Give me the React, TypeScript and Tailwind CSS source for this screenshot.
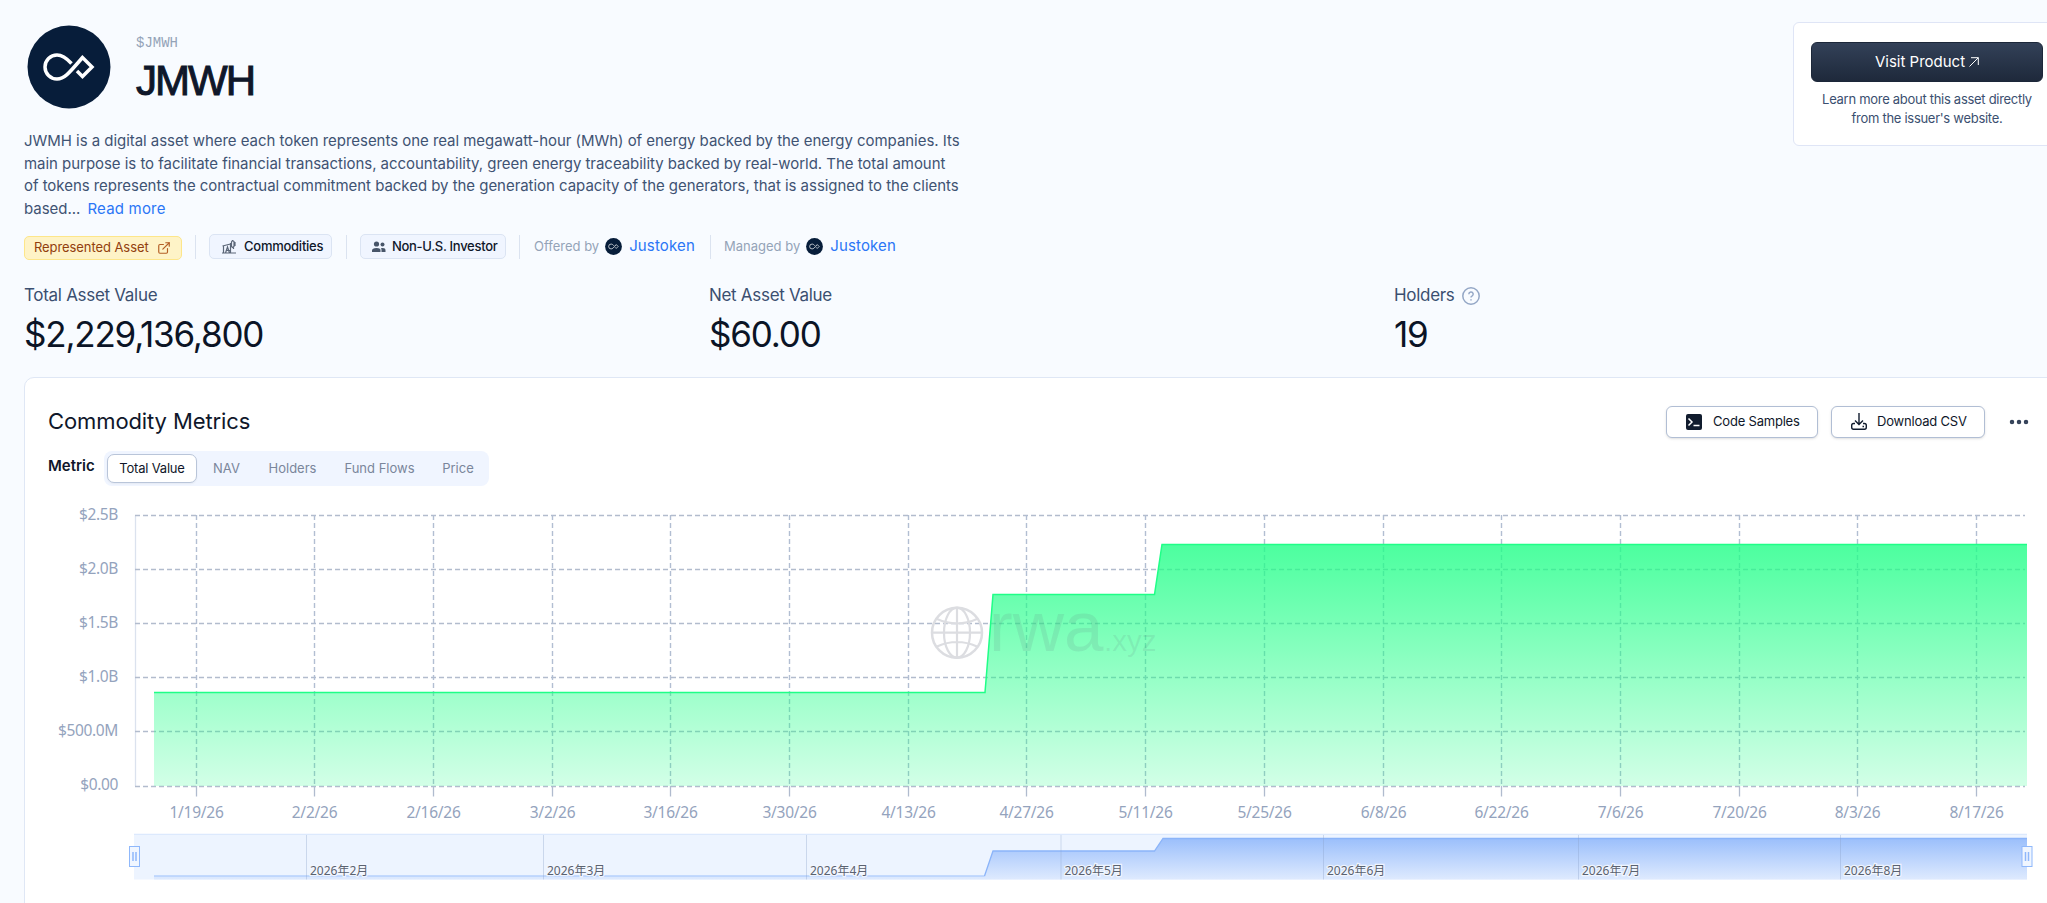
import type { ReactNode } from 'react';
import { ExternalLink, Ellipsis } from 'lucide-react';

const TICKS = [
  '1/19/26', '2/2/26', '2/16/26', '3/2/26', '3/16/26', '3/30/26', '4/13/26', '4/27/26',
  '5/11/26', '5/25/26', '6/8/26', '6/22/26', '7/6/26', '7/20/26', '8/3/26', '8/17/26',
];

const LEVELS = ['$2.5B', '$2.0B', '$1.5B', '$1.0B', '$500.0M', '$0.00'];

const MONTHS = [
  { label: '2026年2月', x: 306.5 },
  { label: '2026年3月', x: 543.5 },
  { label: '2026年4月', x: 806.5 },
  { label: '2026年5月', x: 1061 },
  { label: '2026年6月', x: 1323.5 },
  { label: '2026年7月', x: 1578.5 },
  { label: '2026年8月', x: 1840.5 },
];

function JustokenLogo({ className }: { className: string }) {
  return (
    <svg viewBox="0 0 84 84" className={className}>
      <circle cx="42" cy="42" r="41.5" fill="#071d3a" />
      <path
        d="M44.5 38.5C39 32.500 35 30 30 30a12 12 0 1 0 0 24c7 0 11-4.500 25.500-21.500L65 42 55.500 51.500 50 46"
        fill="none"
        stroke="#fff"
        strokeWidth="3.500"
      />
    </svg>
  );
}

function Divider() {
  return <div className="h-6 w-px bg-[#dbe3f0]" />;
}

function Chip({ icon, children, className }: { icon: ReactNode; children: ReactNode; className: string }) {
  return (
    <div className={`flex h-[25px] items-center rounded-[5px] border border-[#dbe4f3] bg-[#f0f5ff] text-[13px] font-medium whitespace-nowrap text-[#0f172a] ${className}`}>
      {icon}
      {children}
    </div>
  );
}

function Party({ role }: { role: string }) {
  return (
    <div className="flex items-center">
      <span className="text-[13px] text-[#94a3b8]">{role}</span>
      <JustokenLogo className="ml-[6px] size-[17px]" />
      <span className="ml-[7px] text-[15px] tracking-[0.15px] text-[#2b76f6]">Justoken</span>
    </div>
  );
}

function Stat({ label, value, help }: { label: string; value: string; help?: boolean }) {
  return (
    <div className="w-[685px]">
      <div className="flex h-6 items-center text-[17px] tracking-[-0.3px] text-[#3b4f70]">
        <span>{label}</span>
        {help && (
          <svg viewBox="0 0 18 18" className="ml-[7px] size-[18px]" fill="none" stroke="#94a7c6" strokeWidth="1.500">
            <circle cx="9" cy="9" r="8.200" />
            <path d="M6.800 7.200a2.200 2.200 0 1 1 3.200 2c-.7.350-1 .7-1 1.400M9 12.200v1.300" />
          </svg>
        )}
      </div>
      <div className="mt-[6px] text-[35px] leading-[40px] tracking-[-1.2px] text-[#0b1426]">{value}</div>
    </div>
  );
}

function VisitCard() {
  return (
    <div className="mt-[22px] h-[124px] w-[268px] rounded-[6px] border border-[#dfe5f6] bg-white pt-[19px] pl-[17px]">
      <button className="flex h-10 w-[232px] items-center justify-center rounded-[6px] border border-[#1c2739] bg-linear-to-b from-[#334158] to-[#1e293b] text-[15px] text-white">
        Visit Product
        <svg viewBox="0 0 10 10" className="ml-1 size-[10px]" fill="none" stroke="currentColor">
          <path d="M.5 9.500 9.300.7M2 .7h7.300V8" />
        </svg>
      </button>
      <p className="mt-2 w-[232px] text-center text-[13px] leading-[19px] tracking-[-0.29px] text-[#3b4f70]">
        Learn more about this asset directly
        <br />
        from the issuer's website.
      </p>
    </div>
  );
}

function MetricTabs() {
  return (
    <div className="ml-[9px] flex h-[35px] items-center rounded-[8px] bg-[#f0f5ff] px-[3px] text-[13px] text-[#7a869b]">
      <div className="flex h-[29px] w-[90px] items-center justify-center rounded-[7px] border border-[#b9c5d9] bg-white tracking-[-0.2px] text-[#0f172a] shadow-xs">
        Total Value
      </div>
      <div className="w-[59px] text-center">NAV</div>
      <div className="w-[73px] text-center">Holders</div>
      <div className="w-[101px] text-center">Fund Flows</div>
      <div className="w-[56px] text-center">Price</div>
    </div>
  );
}

function Watermark() {
  return (
    <g>
      <g fill="none" stroke="#dcdde1" strokeWidth="2.200">
        <circle cx="957" cy="632.700" r="25" strokeWidth="2.500" />
        <ellipse cx="957" cy="632.700" rx="13" ry="25" />
        <path d="M957 607.700v50M932 632.700h50M937 619q20 9 40 0M937 646.500q20-9 40 0" />
      </g>
      <g fill="#5a6f78" fillOpacity="0.130" fontFamily="Liberation Sans, sans-serif">
        <text x="989" y="651" fontSize="71">rwa</text>
        <text x="1104" y="651" fontSize="29.500">.xyz</text>
      </g>
    </g>
  );
}

function Handle({ x }: { x: number }) {
  return (
    <g fill="#f0f6ff" stroke="#8fb8fb">
      <rect x={x - 5} y="846.500" width="10" height="20" />
      <path d="M-1.500-4.500v9M1.500-4.500v9" transform={`translate(${x} 856.500)`} strokeWidth="1.500" />
    </g>
  );
}

function MetricsChart() {
  return (
    <svg viewBox="25 500 2022 403" className="mt-[14px] block h-[403px] w-[2022px] shrink-0" fontFamily="Noto Sans, Noto Sans CJK SC, sans-serif">
      <defs>
        <linearGradient id="area" x1="0" y1="0" x2="0" y2="1">
          <stop offset="0" stopColor="#1fff87" stopOpacity="0.800" />
          <stop offset="1" stopColor="#1fff87" stopOpacity="0.200" />
        </linearGradient>
        <linearGradient id="brush" x1="0" y1="0" x2="0" y2="1">
          <stop offset="0" stopColor="#9bbffb" />
          <stop offset="1" stopColor="#deeafe" />
        </linearGradient>
      </defs>

      {/* Grid */}
      <path d="M135.500 515.500V786" stroke="#dbe2ee" strokeWidth="1.300" />
      {LEVELS.map((label, i) => {
        const y = 515.5 + Math.round(i * 54.1);
        return (
          <g key={label}>
            <line x1="135" x2="2025" y1={y} y2={y} stroke="#b2bccd" strokeWidth="1.300" strokeDasharray="5 3" />
            <text x="118" y={519.7 + i * 54.1} textAnchor="end" fontSize="15.500" letterSpacing="-0.350" fill="#94a3bd">{label}</text>
          </g>
        );
      })}
      {TICKS.map((label, i) => {
        const x = Math.floor(196.3 + i * 118.67) + 0.5;
        return (
          <g key={label}>
            <line x1={x} x2={x} y1="515" y2="786" stroke="#b2bed2" strokeWidth="1.400" strokeDasharray="5 3" />
            <line x1={x} x2={x} y1="786" y2="796.500" stroke="#b0bbce" strokeWidth="1.300" />
            <text x={x} y="818" textAnchor="middle" fontSize="15.500" letterSpacing="-0.250" fill="#94a3bd">{label}</text>
          </g>
        );
      })}

      {/* Series */}
      <path d="M154 692.500H985L993 594.500H1154.500L1162 544.500H2027V786H154Z" fill="url(#area)" />
      <path d="M154 692.500H985L993 594.500H1154.500L1162 544.500H2027" fill="none" stroke="#1fff87" strokeWidth="1.500" />
      <Watermark />

      {/* Range slider */}
      <rect x="134" y="833.500" width="1893" height="46" fill="#edf4ff" />
      <path d="M134 834.500H2027" stroke="#dce9fd" />
      <path d="M154 876H984.500L993 851H1154.500L1163 838.500H2027V879.500H154Z" fill="url(#brush)" />
      <path d="M154 876H984.500" stroke="#b5d0fc" strokeWidth="1.500" />
      <path d="M984.500 876 993 851H1154.500L1163 838.500H2027" fill="none" stroke="#8bb4f9" strokeWidth="1.300" />
      {MONTHS.map(({ label, x }) => (
        <g key={label}>
          <line x1={x} x2={x} y1="835" y2="879.500" stroke="#8aa0c8" strokeOpacity="0.350" />
          <text x={x + 3.5} y="875" fontSize="12" fill="#5a6270" stroke="#f4f8ff" strokeOpacity="0.900" strokeWidth="2.500" paintOrder="stroke">
            {label}
          </text>
        </g>
      ))}
      <Handle x={134.5} />
      <Handle x={2027} />
    </svg>
  );
}

export default function App() {
  return (
    <div className="h-[903px] w-full overflow-hidden bg-[#f8fbff] font-['Inter',sans-serif]">
      <div className="flex w-[2079px] flex-col pl-6">
        {/* Header */}
        <div className="flex h-[275px] w-[2037px] justify-between">
          <div>
            <div className="flex h-[130px] pt-[25px] pl-[3px]">
              <JustokenLogo className="size-[84px]" />
              <div className="ml-[25px] pt-[9px]">
                <div className="font-['Liberation_Mono',monospace] text-[14px] leading-[18px] text-[#94a3b8]">$JMWH</div>
                <h1 className="mt-[5px] font-['Liberation_Sans',sans-serif] text-[42px] leading-[48px] tracking-[-2px] text-[#0f172a] [-webkit-text-stroke:1px_#0f172a]">
                  JMWH
                </h1>
              </div>
            </div>
            <p className="text-[15px] leading-[22.500px] tracking-[-0.04px] whitespace-nowrap text-[#3f5373]">
              JWMH is a digital asset where each token represents one real megawatt-hour (MWh) of energy backed by the energy companies. Its
              <br />
              main purpose is to facilitate financial transactions, accountability, green energy traceability backed by real-world. The total amount
              <br />
              of tokens represents the contractual commitment backed by the generation capacity of the generators, that is assigned to the clients
              <br />
              based... <span className="ml-[3px] tracking-[0.2px] text-[#2b76f6]">Read more</span>
            </p>
            <div className="mt-[14px] flex h-[25px] items-center">
              <div className="mt-[2px] flex h-6 w-[158px] items-center rounded-[5px] border border-[#fde68a] bg-[#fef3c7] pl-[9px] text-[13px] tracking-[-0.08px] text-[#92400e]">
                Represented Asset
                <ExternalLink className="ml-2 size-[14px] text-[#b45f26]" />
              </div>
              <div className="ml-[13px]"><Divider /></div>
              <Chip
                className="ml-[13px] w-[123px] pl-3 tracking-[-0.25px]"
                icon={
                  <svg viewBox="0 0 14 14" className="mr-2 size-[14px]" fill="none" stroke="#5b6678" strokeWidth="1.200">
                    <path d="M0 13h14M1.500 13V5.500M.5 6l8-2M8.500 3v10M3.500 13l2-6 2 6M4 10.500h4M10.500.5l1.500 1v5l-1.500 1-1-1V2zM13 2v4M11.500 7.500V9" />
                  </svg>
                }
              >
                Commodities
              </Chip>
              <div className="ml-[14px]"><Divider /></div>
              <Chip
                className="ml-[13px] w-[146px] pl-[11px] tracking-[-0.3px]"
                icon={
                  <svg viewBox="0 0 14 12" className="mr-[6px] h-3 w-[14px] shrink-0" fill="#475569">
                    <circle cx="4.500" cy="3" r="2.600" />
                    <circle cx="10.500" cy="3.500" r="2" />
                    <path d="M0 11V9.500Q0 7 4.500 7T8.500 9.500V11zM9.500 11V9Q9.500 8 8.800 7.300 13.500 6.300 13.500 9.500V11z" />
                  </svg>
                }
              >
                Non-U.S. Investor
              </Chip>
              <div className="ml-[13px]"><Divider /></div>
              <div className="ml-[14px] w-[176px]"><Party role="Offered by" /></div>
              <Divider />
              <div className="ml-[13px]"><Party role="Managed by" /></div>
            </div>
          </div>
          <VisitCard />
        </div>

        {/* Stats */}
        <div className="flex h-[102px] pt-[9px]">
          <Stat label="Total Asset Value" value="$2,229,136,800" />
          <Stat label="Net Asset Value" value="$60.00" />
          <Stat label="Holders" value="19" help />
        </div>

        {/* Metrics */}
        <div className="flex h-[560px] flex-col overflow-hidden rounded-tl-[10px] border border-[#dfe7f5] bg-white">
          <div className="flex h-[73px] w-[2006px] items-center justify-between pt-[14px] pl-[23px]">
            <h2 className="text-[22px] tracking-[-0.1px] text-[#0f172a]">Commodity Metrics</h2>
            <div className="flex items-center text-[13px] tracking-[-0.2px] text-[#0f172a]">
              <button className="flex h-8 w-[152px] items-center rounded-[6px] border border-[#b1bed4] bg-white pl-[19px] shadow-sm">
                <svg viewBox="0 0 16 16" className="mr-[11px] size-4" fill="none" stroke="#fff" strokeWidth="1.500">
                  <rect width="16" height="16" rx="2" fill="#111c2e" stroke="none" />
                  <path d="m2.500 4.500 3.500 3.500-3.500 3.500M7.500 11.500h6" />
                </svg>
                Code Samples
              </button>
              <button className="ml-[13px] flex h-8 w-[154px] items-center rounded-[6px] border border-[#b1bed4] bg-white pl-[19px] shadow-sm">
                <svg viewBox="0 0 16 17" className="mr-[10px] h-[17px] w-4" fill="none" stroke="#111c2e" strokeWidth="1.400">
                  <path d="M8 0v11.500M4 7.500l4 4 4-4M4 10.500H2.500Q.7 10.500.7 12.500v1.800q0 2 1.800 2h11q1.800 0 1.800-2v-1.800q0-2-1.800-2H12M11.500 13.500h1.500" />
                </svg>
                Download CSV
              </button>
              <Ellipsis className="ml-[22px] size-6 text-[#334158]" strokeWidth={2.5} />
            </div>
          </div>
          <div className="flex h-[35px] pl-[23px]">
            <span className="w-[47px] text-[15px] leading-[30px] font-semibold text-[#0f172a]">Metric</span>
            <MetricTabs />
          </div>
          <MetricsChart />
        </div>
      </div>
    </div>
  );
}
